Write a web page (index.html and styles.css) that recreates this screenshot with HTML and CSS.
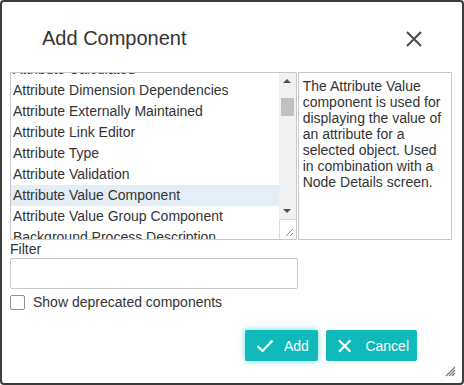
FILE: index.html
```html
<!DOCTYPE html>
<html lang="en">
<head>
    <meta charset="UTF-8">
    <title>Add Component</title>
    <link rel="stylesheet" href="styles.css">
</head>
<body>
    <div class="dialog">
        <div class="header">
            <h1 class="title">Add Component</h1>
            <button class="close" title="Close">
                <svg width="16" height="16" viewBox="0 0 16 16"><path d="M1 1 L15 15 M15 1 L1 15" stroke="#4a4a4a" stroke-width="2" fill="none"/></svg>
            </button>
        </div>
        <div class="picker">
            <div class="list">
                <div class="items">
                    <div class="item">Attribute Calculated</div>
                    <div class="item">Attribute Dimension Dependencies</div>
                    <div class="item">Attribute Externally Maintained</div>
                    <div class="item">Attribute Link Editor</div>
                    <div class="item">Attribute Type</div>
                    <div class="item">Attribute Validation</div>
                    <div class="item selected">Attribute Value Component</div>
                    <div class="item">Attribute Value Group Component</div>
                    <div class="item">Background Process Description</div>
                </div>
                <div class="scrollbar">
                    <div class="arrow up"></div>
                    <div class="track"><div class="thumb"></div></div>
                    <div class="arrow down"></div>
                    <div class="corner">
                        <svg width="9" height="9" viewBox="0 0 9 9"><path d="M8 1 L1 8 M8 5 L5 8" stroke="#888" stroke-width="1" fill="none"/></svg>
                    </div>
                </div>
            </div>
            <div class="description">The Attribute Value component is used for displaying the value of an attribute for a selected object. Used in combination with a Node Details screen.</div>
        </div>
        <label class="filter-label" for="filter">Filter</label>
        <input type="text" id="filter" class="filter">
        <label class="check">
            <span class="box"></span>
            Show deprecated components
        </label>
        <div class="footer">
            <button class="btn add">
                <svg width="18" height="14" viewBox="0 0 18 14"><path d="M1.5 7 L6.5 12 L16.5 1.5" stroke="#fff" stroke-width="2.2" fill="none"/></svg>
                Add
            </button>
            <button class="btn cancel">
                <svg width="14" height="14" viewBox="0 0 14 14"><path d="M1 1 L13 13 M13 1 L1 13" stroke="#fff" stroke-width="2.2" fill="none"/></svg>
                Cancel
            </button>
        </div>
        <div class="grip">
            <svg width="11" height="11" viewBox="0 0 11 11"><path d="M10 1 L1 10 M10 4 L4 10 M10 7 L7 10" stroke="#777" stroke-width="1.2" fill="none"/></svg>
        </div>
    </div>
</body>
</html>
```
FILE: styles.css
```css
body {
    margin: 0;
    font-family: "Liberation Sans", Arial, sans-serif;
    color: #333;
    background: #fff;
}
.dialog {
    position: relative;
    box-sizing: border-box;
    width: 464px;
    height: 385px;
    border: 2px solid #3c3c3c;
    border-radius: 4px;
    padding: 0 10px 0 8px;
}
.header {
    display: flex;
    align-items: center;
    justify-content: space-between;
    height: 70px;
    padding: 0 30px 0 32px;
}
.title {
    margin: 2px 0 0;
    font-size: 20px;
    font-weight: normal;
    color: #333;
}
.close {
    border: none;
    background: none;
    padding: 0;
    margin-top: 4px;
    display: flex;
}
.picker {
    display: flex;
    height: 168px;
}
.list {
    display: flex;
    width: 288px;
    box-sizing: border-box;
    border: 1px solid #c8c8c8;
    overflow: hidden;
}
.items {
    flex: 1;
    margin-top: -14px;
    overflow: hidden;
}
.item {
    font-size: 14px;
    line-height: 17px;
    padding: 2px 2px;
    white-space: nowrap;
}
.item.selected {
    background: #e3eef7;
}
.scrollbar {
    width: 17px;
    display: flex;
    flex-direction: column;
    background: #f1f1f1;
}
.arrow {
    height: 17px;
    position: relative;
}
.arrow::after {
    content: "";
    position: absolute;
    left: 4px;
    top: 6px;
    border-left: 4px solid transparent;
    border-right: 4px solid transparent;
}
.arrow.up::after {
    border-bottom: 4px solid #505050;
}
.arrow.down::after {
    top: 7px;
    border-top: 4px solid #505050;
}
.track {
    flex: 1;
    padding: 8px 2px 0;
}
.thumb {
    height: 18px;
    background: #c1c1c1;
}
.corner {
    height: 17px;
    background: #fff;
    border-left: 1px solid #dcdcdc;
    border-top: 1px solid #dcdcdc;
    display: flex;
    align-items: flex-end;
    justify-content: flex-end;
    padding: 0 2px 2px 0;
}
.description {
    width: 155px;
    box-sizing: border-box;
    border: 1px solid #c8c8c8;
    margin-left: 1px;
    padding: 5px 4px;
    font-size: 14px;
    line-height: 16px;
}
.filter-label {
    display: block;
    font-size: 14px;
    line-height: 16px;
    margin-top: 1px;
}
.filter {
    display: block;
    box-sizing: border-box;
    width: 288px;
    height: 31px;
    margin: 1px 0 0;
    border: 1px solid #c8c8c8;
    border-radius: 2px;
}
.check {
    display: flex;
    align-items: center;
    gap: 8px;
    margin-top: 5px;
    font-size: 14px;
}
.box {
    width: 13px;
    height: 13px;
    border: 1px solid #8f8f8f;
    border-radius: 2px;
}
.footer {
    display: flex;
    gap: 8px;
    margin: 20px 0 0 235px;
}
.btn {
    display: flex;
    align-items: center;
    gap: 12px;
    height: 31px;
    padding: 0 8px 0 12px;
    border: none;
    border-radius: 2px;
    background: #10baba;
    color: #fff;
    font-family: "Liberation Sans", Arial, sans-serif;
    font-size: 14px;
}
.btn.add {
    width: 73px;
    padding-left: 11px;
    gap: 10px;
    box-shadow: 0 0 6px rgba(16, 186, 186, 0.6);
}
.btn.cancel {
    width: 91px;
    gap: 14px;
}
.grip {
    position: absolute;
    right: 6px;
    bottom: 6px;
    display: flex;
}
```
